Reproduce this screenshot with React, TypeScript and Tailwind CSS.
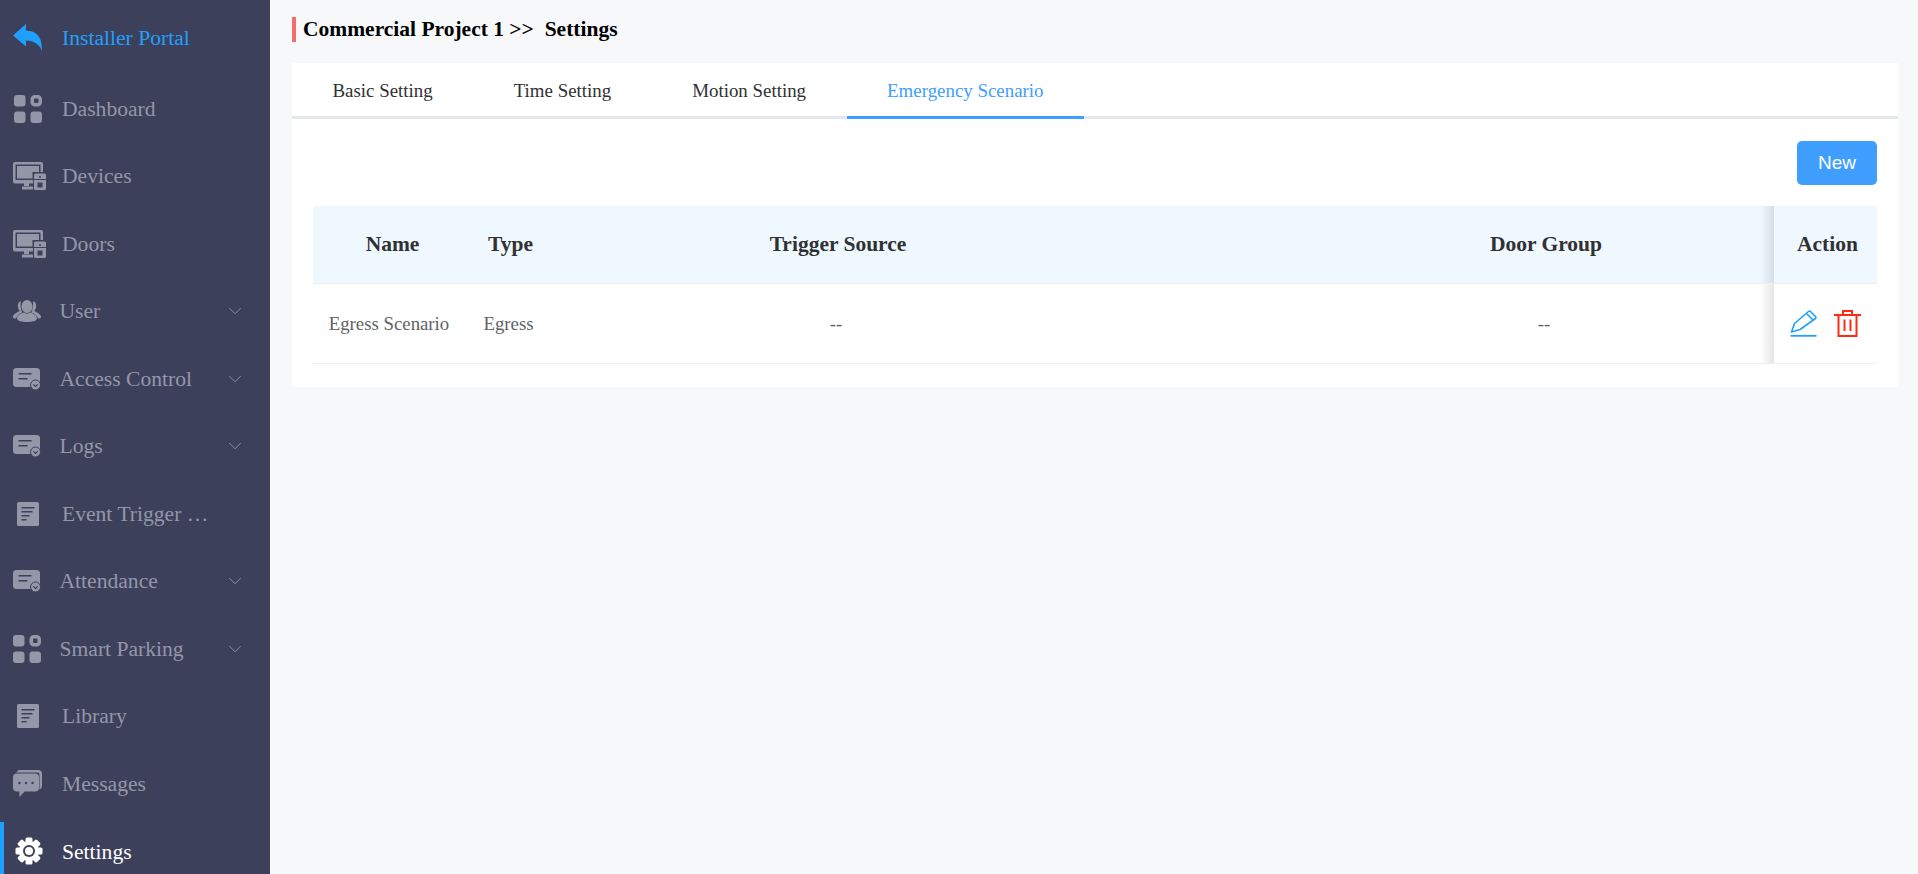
import React from "react";
import { ChevronDown } from "lucide-react";

const serif = "font-['Liberation_Serif',serif]";

function ReplyIcon() {
    return (
        <svg width="30" height="28" viewBox="0 0 30 28" className="text-[#1fa0ff]" fill="currentColor">
            <path d="M0 11.500 13 0 V6.500 C23 7 29.500 12 29 27.500 C27 20.500 21 16.500 13 16.500 V22.500 Z" />
        </svg>
    );
}

function GridIcon() {
    return (
        <svg width="28" height="28" viewBox="0 0 28 28" fill="#9397a8">
            <rect x="0" y="0" width="11.500" height="11.500" rx="3" />
            <rect x="18.250" y="1.750" width="8" height="8" rx="2.500" fill="#3d405b" stroke="#9397a8" strokeWidth="3.500" />
            <rect x="0" y="16.500" width="11.500" height="11.500" rx="3" />
            <rect x="16.500" y="16.500" width="11.500" height="11.500" rx="3" />
        </svg>
    );
}

function DevicesIcon() {
    return (
        <svg width="33" height="28" viewBox="0 0 33 28" fill="#9397a8">
            <path fillRule="evenodd" d="M2 0h26a2 2 0 0 1 2 2v8h-2.500V2.500h-25V18H20v3.500H2a2 2 0 0 1-2-2V2a2 2 0 0 1 2-2Z" />
            <rect x="4" y="4" width="22" height="6" />
            <rect x="4" y="10" width="15.500" height="6.500" />
            <rect x="11" y="21" width="5" height="3" />
            <rect x="9" y="24.500" width="11" height="3" rx="0.500" />
            <path fillRule="evenodd" d="M22.500 11.500h9a1.500 1.500 0 0 1 1.500 1.500v4h-12v-4a1.500 1.500 0 0 1 1.500-1.500Zm4.500 2.500a1 1 0 1 0 0 2 1 1 0 0 0 0-2Z" />
            <path fillRule="evenodd" d="M21 18h12v8.500a1.500 1.500 0 0 1-1.500 1.500h-9a1.500 1.500 0 0 1-1.500-1.500Zm3.500 2.500v5h5v-5Z" />
        </svg>
    );
}

function UsersIcon() {
    return (
        <svg width="28" height="22" viewBox="0 0 28 22" fill="#9397a8">
            <ellipse cx="14" cy="6.500" rx="5.500" ry="6.500" />
            <path d="M8 1.500C5.500 1.500 4.500 4 5 7c.3 2 1 3 1.800 4C4 12.500 0 14 0 17c0 1 .8 1.500 3 1.500C4 15 7 13.500 9.500 12.500 7.800 10 7 5 8 1.500Z" />
            <path d="M20 1.500C22.500 1.500 23.500 4 23 7c-.3 2-1 3-1.800 4 2.800 1.500 6.800 3 6.800 6 0 1-.8 1.500-3 1.500-1-3.500-4-5-7-6 1.700-2.500 2.500-7.500 2-11Z" />
            <path d="M11 12.500c-3 1-7 2.500-7 6 0 2.500 5 3.500 10 3.500s10-1 10-3.500c0-3.500-4-5-7-6-1.800 1.500-4.200 1.500-6 0Z" />
        </svg>
    );
}

function CardIcon() {
    return (
        <svg width="28" height="22" viewBox="0 0 28 22" fill="#9397a8">
            <rect x="0" y="0" width="27" height="19" rx="3.500" />
            <rect x="5.500" y="5" width="13" height="1.500" fill="#3d405b" />
            <rect x="5.500" y="10" width="9" height="1.500" fill="#3d405b" />
            <circle cx="22.500" cy="17" r="5" stroke="#3d405b" strokeWidth="1" />
            <path d="M20.300 16.300 22.500 18.500 24.700 16.300" fill="none" stroke="#3d405b" strokeWidth="1.200" />
        </svg>
    );
}

function DocIcon() {
    return (
        <svg width="22" height="24" viewBox="0 0 22 24" fill="#9397a8">
            <rect x="0" y="0" width="22" height="24" rx="1.500" />
            <rect x="4.500" y="5" width="13" height="1.500" fill="#3d405b" />
            <rect x="4.500" y="9" width="11" height="1.500" fill="#3d405b" />
            <rect x="4.500" y="13" width="8" height="1.500" fill="#3d405b" />
            <rect x="4.500" y="17" width="5" height="1.500" fill="#3d405b" />
        </svg>
    );
}

function MessagesIcon() {
    return (
        <svg width="29" height="27" viewBox="0 0 29 27" fill="#9397a8">
            <path d="M6 0h19a4 4 0 0 1 4 4v12a4 4 0 0 1-2.500 3.700V4.500A2 2 0 0 0 24.500 2.500H3.500A4 4 0 0 1 6 0Z" />
            <path d="M4 3.500h18a4 4 0 0 1 4 4v10a4 4 0 0 1-4 4H11.500L6.500 27v-5.500H4a4 4 0 0 1-4-4v-10a4 4 0 0 1 4-4Z" />
            <circle cx="6.500" cy="13" r="1.200" fill="#3d405b" />
            <circle cx="13" cy="13" r="1.200" fill="#3d405b" />
            <circle cx="19.500" cy="13" r="1.200" fill="#3d405b" />
        </svg>
    );
}

function GearIcon() {
    const angles = [0, 45, 90, 135];
    return (
        <svg width="28" height="28" viewBox="0 0 28 28" fill="white">
            {angles.map((a) => (
                <rect key={a} x="10.500" y="0.500" width="7" height="27" rx="1.500" transform={`rotate(${a} 14 14)`} />
            ))}
            <circle cx="14" cy="14" r="10" />
            <circle cx="14" cy="14" r="6" fill="#3d405b" />
            <circle cx="14" cy="14" r="4" />
        </svg>
    );
}

function PencilIcon() {
    return (
        <svg width="27" height="27" viewBox="0 0 27 27" fill="none" stroke="#1fa0ff" strokeWidth="1.600">
            <path d="M1.500 22 4.500 13.500 18.500 1.500a1.500 1.500 0 0 1 2 0l5 5a1.500 1.500 0 0 1 0 2L10 19.500 1.500 22Z" strokeLinejoin="round" />
            <path d="M16.500 3.500 23.500 10.500" />
            <path d="M0.500 25.800H26.500" strokeWidth="1.800" />
        </svg>
    );
}

function TrashIcon() {
    return (
        <svg width="27" height="27" viewBox="0 0 27 27" fill="none" stroke="#ff2a16" strokeWidth="2">
            <path d="M0 5H27" />
            <path d="M9 5V1H18V5" />
            <path d="M4.500 5V26H22.500V5" />
            <path d="M10.500 9.500V21" />
            <path d="M16.500 9.500V21" />
        </svg>
    );
}

const navItems = [
    { label: "Dashboard", icon: <div className="pl-[1px]"><GridIcon /></div>, indent: false },
    { label: "Devices", icon: <DevicesIcon />, indent: false },
    { label: "Doors", icon: <DevicesIcon />, indent: false },
    { label: "User", icon: <UsersIcon />, indent: true },
    { label: "Access Control", icon: <CardIcon />, indent: true },
    { label: "Logs", icon: <CardIcon />, indent: true },
    { label: "Event Trigger …", icon: <div className="pl-[4px]"><DocIcon /></div>, indent: false },
    { label: "Attendance", icon: <CardIcon />, indent: true },
    { label: "Smart Parking", icon: <GridIcon />, indent: true },
    { label: "Library", icon: <div className="pl-[4px]"><DocIcon /></div>, indent: false },
    { label: "Messages", icon: <MessagesIcon />, indent: false },
];

const tabs = ["Basic Setting", "Time Setting", "Motion Setting"];

function HeadShadow() {
    return <div className="absolute bottom-0 right-full top-0 w-[14px] bg-gradient-to-l from-black/10 to-transparent" />;
}

export default function App() {
    return (
        <div className={`flex h-[874px] w-[1918px] overflow-hidden bg-[#f6f8fa] ${serif}`}>
            {/* Sidebar */}
            <aside className="flex w-[270px] shrink-0 flex-col overflow-hidden bg-[#3d405b] pl-[13px]">
                <div className="flex h-[75px] shrink-0 items-center text-[21.600px] text-[#1fa0ff]">
                    <div className="w-[49px]"><ReplyIcon /></div>
                    <span className="pt-[2px]">Installer Portal</span>
                </div>
                {navItems.map((item) => (
                    <div key={item.label} className="flex h-[67.500px] shrink-0 items-center text-[21.600px] text-[#9397a8]">
                        <div className={item.indent ? "w-[46.500px]" : "w-[49px]"}>{item.icon}</div>
                        <span className="flex-1">{item.label}</span>
                        {item.indent && <ChevronDown className="mr-[24px] h-[22px] w-[22px]" strokeWidth={1} />}
                    </div>
                ))}
                <div className="relative -ml-[13px] flex h-[67.500px] shrink-0 items-center pl-[13px] text-[21.600px] text-white">
                    <div className="absolute bottom-0 left-0 top-[4px] w-[4px] bg-[#1fa0ff]" />
                    <div className="w-[49px] pl-[1.500px]"><GearIcon /></div>
                    <span className="pt-[1px]">Settings</span>
                </div>
            </aside>

            {/* Main */}
            <main className="flex-1 pl-[22px] pr-[20px] pt-[17px]">
                <div className="flex h-[25px] items-center border-l-[4px] border-[#f56c6c] pl-[7px] text-[21.500px] font-bold text-black whitespace-pre">
                    Commercial Project 1 {">>"}  Settings
                </div>

                <div className="mt-[21px] bg-white pb-[23px]">
                    <div className="flex h-[56px] border-b-[3px] border-[#e4e7ed] pt-[4px] text-[18.900px] text-[#303133]">
                        {tabs.map((t) => (
                            <div key={t} className="flex items-center px-[40.500px]">{t}</div>
                        ))}
                        <div className="-mb-[3px] flex items-center border-b-[3px] border-[#409eff] px-[40.500px] text-[#409eff]">
                            Emergency Scenario
                        </div>
                    </div>

                    <div className="px-[21px] pt-[22px]">
                        <div className="flex justify-end">
                            <button className="h-[44px] w-[80px] rounded-[5px] bg-[#409eff] font-['Liberation_Sans',sans-serif] text-[19px] text-white">
                                New
                            </button>
                        </div>

                        <div className="mt-[21px] grid grid-cols-[152px_90px_562px_657px_103px]">
                            <div className="flex h-[78px] items-center justify-center border-b border-[#ebeef5] bg-[#eff7ff] pl-[7px] text-[21.500px] font-bold text-[#303133]">Name</div>
                            <div className="flex h-[78px] items-center justify-center border-b border-[#ebeef5] bg-[#eff7ff] pl-[1px] text-[21.500px] font-bold text-[#303133]">Type</div>
                            <div className="flex h-[78px] items-center justify-center border-b border-[#ebeef5] bg-[#eff7ff] pl-[4px] text-[21.500px] font-bold text-[#303133]">Trigger Source</div>
                            <div className="flex h-[78px] items-center justify-center border-b border-[#ebeef5] bg-[#eff7ff] pl-[201px] text-[21.500px] font-bold text-[#303133]">Door Group</div>
                            <div className="relative flex h-[78px] items-center justify-center border-b border-[#ebeef5] bg-[#eff7ff] pl-[4px] text-[21.500px] font-bold text-[#303133]"><HeadShadow />Action</div>

                            <div className="flex h-[80px] items-center justify-center border-b border-[#ebeef5] pt-[2px] text-[18.800px] text-[#606266]">Egress Scenario</div>
                            <div className="flex h-[80px] items-center justify-center border-b border-[#ebeef5] pr-[3px] pt-[2px] text-[18.800px] text-[#606266]">Egress</div>
                            <div className="flex h-[80px] items-center justify-center border-b border-[#ebeef5] pt-[2px] text-[18.800px] text-[#606266]">--</div>
                            <div className="flex h-[80px] items-center justify-center border-b border-[#ebeef5] pl-[197px] pt-[2px] text-[18.800px] text-[#606266]">--</div>
                            <div className="relative flex h-[80px] items-center justify-center gap-[17px] border-b border-[#ebeef5] bg-white">
                                <HeadShadow />
                                <PencilIcon />
                                <TrashIcon />
                            </div>
                        </div>
                    </div>
                </div>
            </main>
        </div>
    );
}
